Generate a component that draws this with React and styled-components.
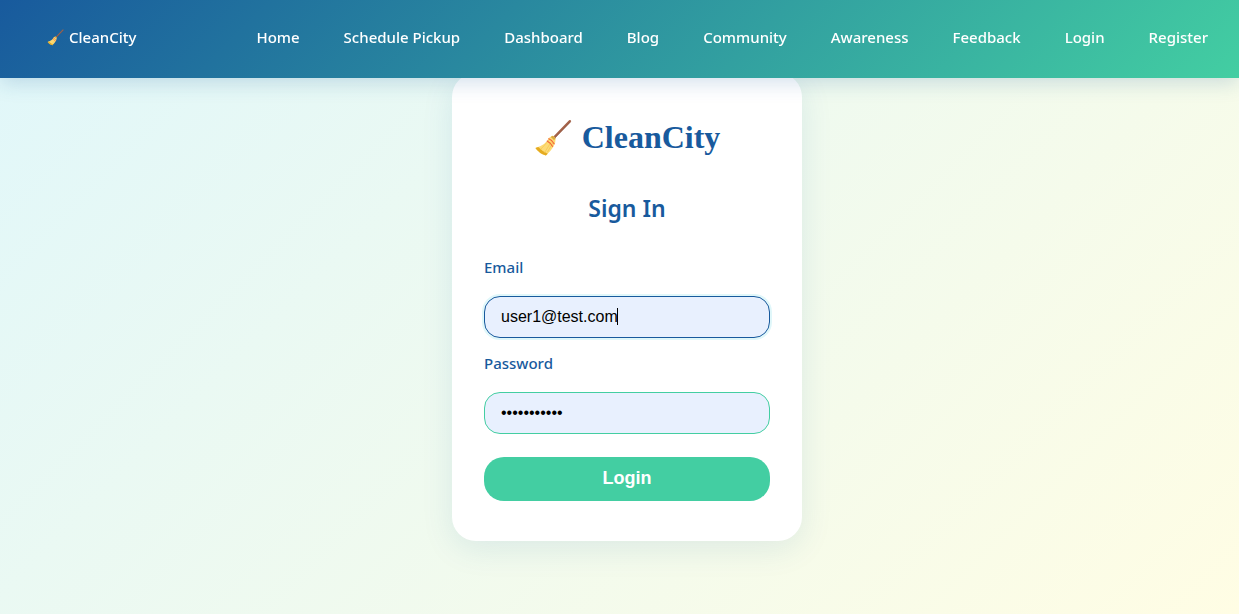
import React from "react";
import styled, { createGlobalStyle, ThemeProvider } from "styled-components";

const theme = {
  blue: "#185a9d",
  green: "#43cea2",
  field: "#e8f0fe",
  glow: "#e0f7fa",
  sans: '"Noto Sans", "Open Sans", sans-serif',
  ui: '"Liberation Sans", Arial, sans-serif',
  serif: '"Liberation Serif", "Times New Roman", serif',
};

const GlobalStyle = createGlobalStyle`
  *, *::before, *::after { box-sizing: border-box; }
  body {
    margin: 0;
    min-height: 100vh;
    background: linear-gradient(135deg, #e0f7fa 0%, #fffde4 100%);
    font-family: ${theme.sans};
  }
`;

const NavBar = styled.nav`
  position: fixed;
  top: 0;
  left: 0;
  right: 0;
  z-index: 10;
  display: flex;
  align-items: center;
  justify-content: space-between;
  min-height: 78px;
  padding: 12px 31px 16px 47px;
  background: linear-gradient(135deg, ${(p) => p.theme.blue}, ${(p) => p.theme.green});
  box-shadow: 0 4px 20px rgba(24, 90, 157, 0.2);
`;

const NavLinks = styled.div`
  display: flex;
  align-items: center;
  gap: 44px;
`;

const NavLink = styled.a`
  display: inline-flex;
  align-items: center;
  gap: 5px;
  color: #fff;
  font-size: 15px;
  font-weight: 500;
  line-height: 24px;
  white-space: nowrap;
  text-decoration: none;
`;

const Page = styled.main`
  display: flex;
  align-items: center;
  justify-content: center;
  min-height: 100vh;
  padding-left: 15px;
`;

const Card = styled.form`
  width: 100%;
  max-width: 350px;
  padding: 40px 32px;
  border-radius: 24px;
  background: #fff;
  box-shadow: 0 8px 32px rgba(24, 90, 157, 0.1);
`;

const Brand = styled.h1`
  display: flex;
  align-items: center;
  justify-content: center;
  gap: 10px;
  margin: 0 0 24px;
  color: ${(p) => p.theme.blue};
  font-family: ${(p) => p.theme.serif};
  font-size: 32px;
  line-height: 48px;

  svg {
    margin-top: 2px;
  }
`;

const Title = styled.h2`
  margin: 0 0 24px;
  color: ${(p) => p.theme.blue};
  font-size: 23px;
  font-weight: 600;
  line-height: 46px;
  text-align: center;
`;

const Label = styled.label`
  display: block;
  margin-bottom: 17px;
  color: ${(p) => p.theme.blue};
  font-size: 15px;
  font-weight: 500;
  line-height: 24px;
`;

const Field = styled.div`
  position: relative;
  margin-bottom: ${(p) => p.$after}px;
`;

const Input = styled.input`
  display: block;
  width: 100%;
  height: 42px;
  padding: 0 16px;
  border: 1px solid ${(p) => p.theme.green};
  border-radius: 16px;
  outline: none;
  background: ${(p) => p.theme.field};
  color: #000;
  caret-color: transparent;
  font-family: ${(p) => p.theme.ui};
  font-size: 16px;

  &:focus {
    border-color: ${(p) => p.theme.blue};
    box-shadow: 0 0 0 2px ${(p) => p.theme.glow};
  }
`;

const Caret = styled.span`
  position: absolute;
  top: 12px;
  left: 133px;
  width: 1px;
  height: 17px;
  background: #000;
  pointer-events: none;
`;

const Submit = styled.button`
  display: block;
  width: 100%;
  height: 44px;
  padding: 0 0 2px;
  border: 0;
  border-radius: 20px;
  background: ${(p) => p.theme.green};
  color: #fff;
  font-family: ${(p) => p.theme.ui};
  font-size: 18px;
  font-weight: 700;
  cursor: pointer;
`;

function Broom({ size }) {
  return (
    <svg width={size} height={size} viewBox="0 0 40 40" aria-hidden="true">
      <path d="M21 19.5 37.8 2.2" stroke="#a5634a" strokeWidth="2.4" strokeLinecap="round" />
      <path d="M22 20 38.2 3.2" stroke="#8a4e3a" strokeWidth="0.7" strokeLinecap="round" />
      <path d="M19.5 17.5Q21.5 18 22.800 20.800Q23 29 12.500 38.500Q5 36 1.500 30.500Q13 27 15.500 20Z" fill="#fddb76" />
      <path d="M1.500 30.500Q5 36 12.500 38.500L14.500 36.500Q9 34.500 4.500 29.500Z" fill="#e5ab20" />
      <path d="M16 22 7 32M18.500 23.500 11 35.500M20 25 14 35" stroke="#f5c84e" strokeWidth="0.8" fill="none" />
      <path d="M15.200 20.600Q19 22 21.500 26.500M13.500 22.800Q17.500 25 19.800 29.200" stroke="#f4633a" strokeWidth="1.200" fill="none" />
      <path d="M19.500 17.500Q21.500 18 22.800 20.800L21 22Q19 20 17.500 19Z" fill="#d9a83f" />
    </svg>
  );
}

const LINKS = [
  "Home",
  "Schedule Pickup",
  "Dashboard",
  "Blog",
  "Community",
  "Awareness",
  "Feedback",
  "Login",
  "Register",
];

export default function App() {
  return (
    <ThemeProvider theme={theme}>
      <GlobalStyle />
      <NavBar>
        <NavLink href="#home">
          <Broom size={17} />
          CleanCity
        </NavLink>
        <NavLinks>
          {LINKS.map((name) => (
            <NavLink key={name} href={`#${name.toLowerCase().replace(" ", "-")}`}>
              {name}
            </NavLink>
          ))}
        </NavLinks>
      </NavBar>
      <Page>
        <Card onSubmit={(e) => e.preventDefault()}>
          <Brand>
            <Broom size={38} />
            CleanCity
          </Brand>
          <Title>Sign In</Title>
          <Label htmlFor="email">Email</Label>
          <Field $after={13}>
            <Input id="email" type="email" defaultValue="user1@test.com" autoFocus />
            <Caret />
          </Field>
          <Label htmlFor="password">Password</Label>
          <Field $after={23}>
            <Input id="password" type="password" defaultValue="password123" />
          </Field>
          <Submit type="submit">Login</Submit>
        </Card>
      </Page>
    </ThemeProvider>
  );
}
